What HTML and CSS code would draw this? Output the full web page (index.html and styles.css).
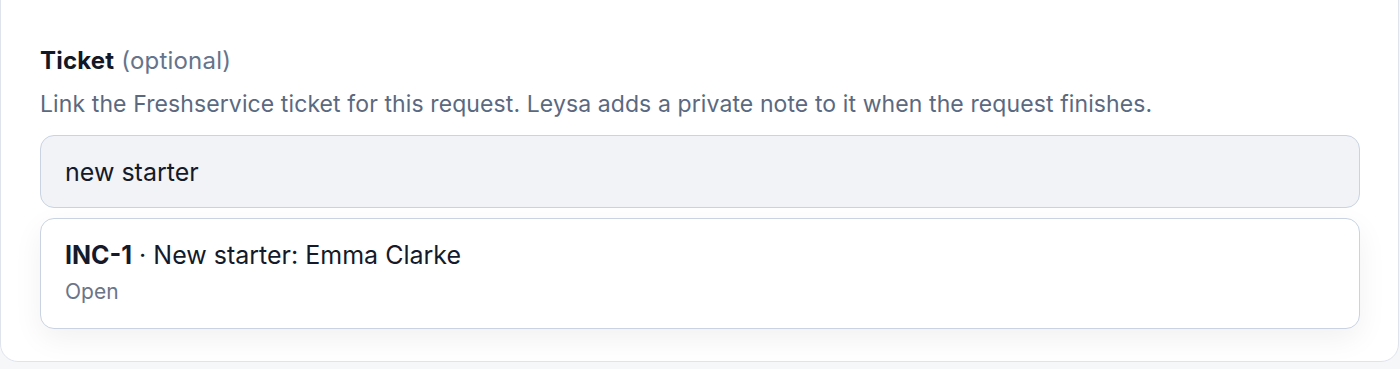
FILE: index.html
```html
<!DOCTYPE html>
<html lang="en">
<head>
<meta charset="utf-8">
<title>Ticket</title>
<link rel="stylesheet" href="styles.css">
</head>
<body>
  <section class="card">
    <div class="field">
      <div class="label"><span class="label-main">Ticket</span> <span class="label-opt">(optional)</span></div>
      <p class="desc">Link the Freshservice ticket for this request. Leysa adds a private note to it when the request finishes.</p>
      <div class="combo">
        <div class="input">new starter</div>
        <ul class="results">
          <li class="result">
            <div class="result-title"><strong>INC-1</strong> · New starter: Emma Clarke</div>
            <div class="result-status">Open</div>
          </li>
        </ul>
      </div>
    </div>
  </section>
</body>
</html>
```

FILE: styles.css
```css
* { box-sizing: border-box; }
html, body {
  margin: 0;
  padding: 0;
  background: #f6f7f9;
  font-family: "Inter", "Liberation Sans", sans-serif;
  overflow: hidden;
}
.card {
  margin-top: -40px;
  width: 1399px;
  background: #ffffff;
  border: 1px solid #dfe4ec;
  border-radius: 0 0 18px 18px;
  padding: 85px 38px 32px 39px;
}
.label {
  font-size: 24px;
  line-height: 30px;
  color: #111827;
  letter-spacing: 0.2px;
}
.label-main { font-weight: 700; }
.label-opt { color: #64748b; font-weight: 400; }
.desc {
  margin: 13px 0 0;
  font-size: 23px;
  line-height: 30px;
  letter-spacing: 0.1px;
  color: #5b6980;
}
.combo {
  margin-top: 16px;
  display: flex;
  flex-direction: column;
  gap: 10px;
}
.input {
  height: 73px;
  background: #f1f3f7;
  border: 1.5px solid #c9d3e1;
  border-radius: 14px;
  padding: 0 24px;
  display: flex;
  align-items: center;
  font-size: 25px;
  line-height: 30px;
  color: #141a2a;
}
.results {
  list-style: none;
  margin: 0;
  padding: 0;
  background: #ffffff;
  border: 1.5px solid #c9d3e1;
  border-radius: 14px;
  box-shadow: 0 10px 30px rgba(15, 23, 42, 0.06);
}
.result {
  padding: 20.5px 24px 23px;
}
.result-title {
  font-size: 25px;
  line-height: 30px;
  color: #141a2a;
}
.result-title strong { font-weight: 700; }
.result-status {
  margin-top: 9px;
  font-size: 21px;
  line-height: 26px;
  color: #6b7589;
}
```
